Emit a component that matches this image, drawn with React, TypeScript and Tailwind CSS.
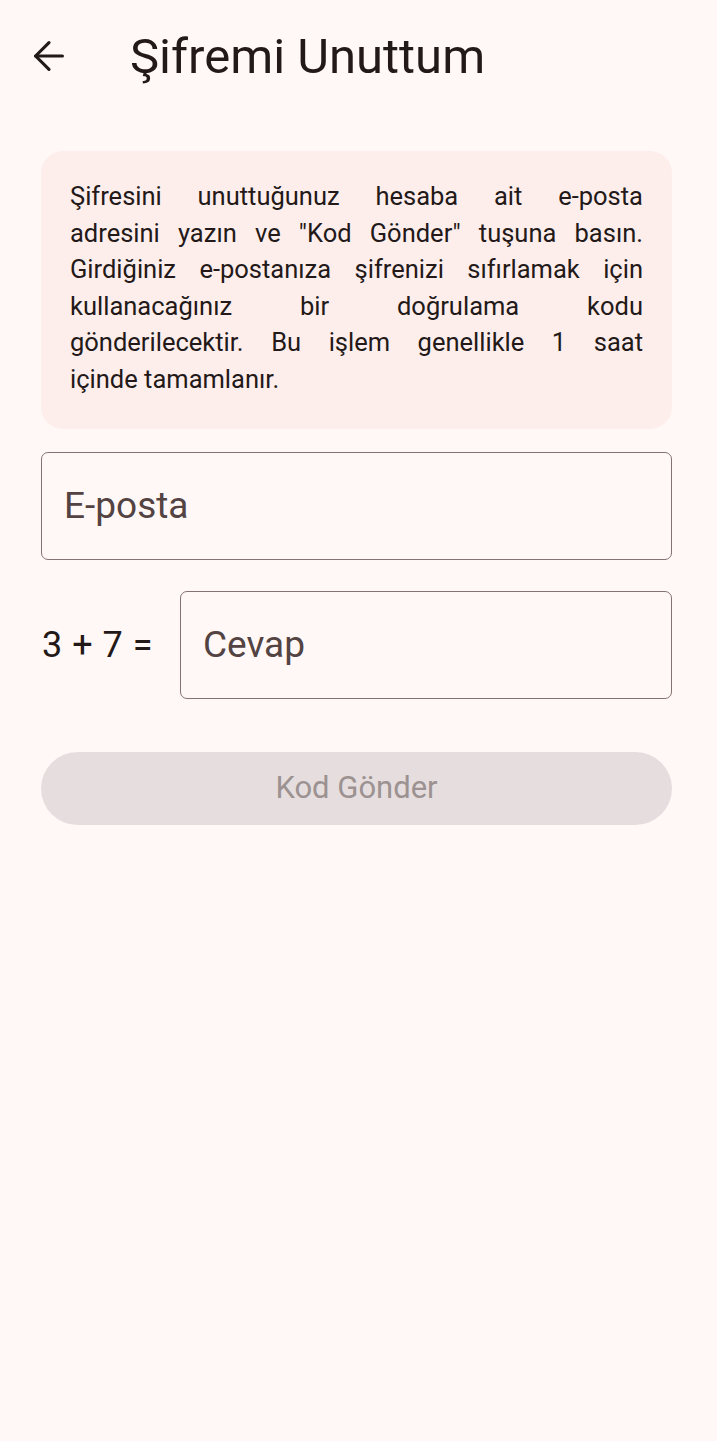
import { ArrowLeft } from 'lucide-react';

const font = { fontFamily: 'Roboto, "Noto Sans", sans-serif' };

// the reference breaks the justified paragraph at fixed points
const lines = [
  'Şifresini unuttuğunuz hesaba ait e-posta',
  'adresini yazın ve "Kod Gönder" tuşuna basın.',
  'Girdiğiniz e-postanıza şifrenizi sıfırlamak için',
  'kullanacağınız bir doğrulama kodu',
  'gönderilecektir. Bu işlem genellikle 1 saat',
];

export default function App() {
  return (
    <div className="min-h-[1441px] w-full bg-[#fff8f6] text-[#231918]" style={font}>
      <header className="flex h-[112px] items-center">
        <button className="ml-[26px] flex h-[46px] w-[46px] items-center justify-center text-[#231918]">
          <ArrowLeft className="h-[46px] w-[46px]" strokeWidth={1.65} />
        </button>
        <h1 className="ml-[58px] text-[49px] leading-none">Şifremi Unuttum</h1>
      </header>

      <main className="flex flex-col pl-[41px] pr-[45px] pt-[39px]">
        <div className="rounded-[22px] bg-[#fdeeec] px-[29px] pt-[27px] pb-[31px]">
          <div className="text-[25.5px] leading-[36.6px] text-[#231918]">
            {lines.map((line) => (
              <p key={line} className="text-justify [text-align-last:justify]">
                {line}
              </p>
            ))}
            <p>içinde tamamlanır.</p>
          </div>
        </div>

        <div className="mt-[23px] flex h-[108px] items-center rounded-[7px] border-[1.5px] border-[#857371] px-[22px]">
          <input
            placeholder="E-posta"
            className="w-full bg-transparent text-[37px] text-[#231918] outline-none placeholder:text-[#534342]"
          />
        </div>

        <div className="mt-[31px] flex items-center">
          <span className="w-[139px] shrink-0 pl-[1px] text-[36px] tracking-[0.5px] text-[#231918]">3 + 7 =</span>
          <div className="flex h-[108px] flex-1 items-center rounded-[7px] border-[1.5px] border-[#857371] px-[22px]">
            <input
              placeholder="Cevap"
              className="w-full bg-transparent text-[37px] text-[#231918] outline-none placeholder:text-[#534342]"
            />
          </div>
        </div>

        <button
          disabled
          className="mt-[53px] h-[73px] rounded-full bg-[#e6dede] text-[31px] text-[#9c9291]"
        >
          Kod Gönder
        </button>
      </main>
    </div>
  );
}
